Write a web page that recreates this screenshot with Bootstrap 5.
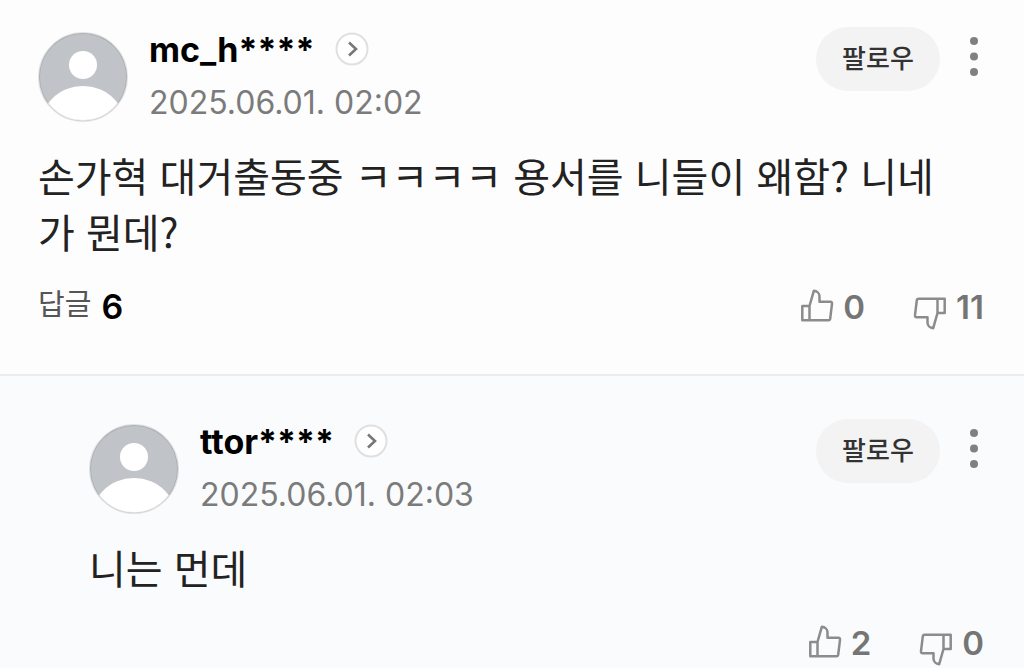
<!DOCTYPE html>
<html lang="ko">
<head>
<meta charset="utf-8">
<meta name="viewport" content="width=device-width, initial-scale=1">
<title>댓글</title>
<link href="https://cdn.jsdelivr.net/npm/bootstrap@5.3.0/dist/css/bootstrap.min.css" rel="stylesheet">
<style>
body { background: #fdfdfd; color: #222; font-family: Inter, "Noto Sans CJK KR", sans-serif; }
.comment { padding: 32px 40px 43px 38px; }
.comment-reply { padding: 48px 40px 4px 89px; background: #fafbfd; border-top: 2px solid #ececee; }
.avatar { width: 90px; height: 90px; }
.who { margin-left: 21px; }
.user { font-size: 34px; line-height: 36px; font-weight: 700; color: #000; }
.go { width: 34px; height: 34px; margin: -3px 0 0 20px; }
.stamp { font-size: 32px; line-height: 40px; color: #7b7b7b; margin-top: 15px; }
.follow { width: 124px; height: 64px; margin-top: -5px; background: #f3f3f3; color: #333; font-size: 26px; line-height: 32px; font-weight: 500; border: 0; font-family: "Noto Sans CJK KR", sans-serif; }
.follow:hover { background: #e9e9e9; color: #333; }
.more { width: 20px; height: 50px; margin-left: 24px; }
.message { font-family: "Noto Sans CJK KR", sans-serif; font-size: 40px; line-height: 56px; margin: 0; padding: 24px 16px 0 0; word-break: break-all; }
.actions { margin-top: 24px; }
.replies { font-size: 29px; line-height: 40px; color: #555; }
.replies b { font-size: 34px; font-weight: 600; color: #000; margin-left: 2px; }
.vote { font-size: 33px; line-height: 40px; font-weight: 600; color: #757575; gap: 9px; }
.vote svg { width: 34px; height: 34px; margin-top: -4px; }
.vote.vote-down svg { margin-top: 14px; }
</style>
</head>
<body>
<svg class="position-absolute" width="0" height="0" aria-hidden="true">
  <clipPath id="disc"><circle cx="45" cy="45" r="44"/></clipPath>
  <symbol id="person" viewBox="0 0 90 90">
    <circle cx="45" cy="45" r="44" fill="#c0c4c9"/>
    <g clip-path="url(#disc)" fill="#fff"><circle cx="45" cy="33" r="14"/><circle cx="45" cy="98" r="44"/></g>
    <circle cx="45" cy="45" r="44" fill="none" stroke="#000" stroke-opacity=".1" stroke-width="2"/>
  </symbol>
  <symbol id="arrow" viewBox="0 0 34 34">
    <circle cx="17" cy="17" r="15.5" fill="#fff" stroke="#e0e0e0" stroke-width="2"/>
    <path d="M14 10.5l7 6.5-7 6.5" fill="none" stroke="#777" stroke-width="2.6"/>
  </symbol>
  <symbol id="dots" viewBox="0 0 20 50">
    <g fill="#808080"><circle cx="10" cy="9" r="4"/><circle cx="10" cy="24.500" r="4"/><circle cx="10" cy="40" r="4"/></g>
  </symbol>
  <symbol id="thumb" viewBox="0 0 34 34">
    <path d="M2.300 18h7.200v14.200H2.300zM9.500 18l4.300-15.200c3.200.2 5.700 2.500 5.700 5.700v5.300h10.800q2 0 1.700 2l-1.800 14.800q-.2 1.600-1.800 1.600H9.500z" fill="none" stroke="#8c8c8c" stroke-width="2.500" stroke-linejoin="round"/>
  </symbol>
</svg>

<main>
  <article class="comment">
    <header class="d-flex align-items-start">
      <svg class="avatar flex-shrink-0"><use href="#person"/></svg>
      <div class="who">
        <div class="d-flex align-items-center">
          <span class="user">mc_h****</span>
          <a href="#" class="d-flex" aria-label="프로필 보기"><svg class="go"><use href="#arrow"/></svg></a>
        </div>
        <div class="stamp">2025.06.01. 02:02</div>
      </div>
      <button type="button" class="btn follow rounded-pill ms-auto p-0 pb-1">팔로우</button>
      <button type="button" class="btn more p-0 border-0 d-flex" aria-label="더보기"><svg class="w-100 h-100"><use href="#dots"/></svg></button>
    </header>
    <p class="message">손가혁 대거출동중 ㅋㅋㅋㅋ 용서를 니들이 왜함? 니네가 뭔데?</p>
    <footer class="actions d-flex align-items-center justify-content-between">
      <a href="#" class="replies d-flex align-items-center gap-2 text-decoration-none"><span class="pb-1">답글</span><b>6</b></a>
      <div class="d-flex gap-5">
        <button type="button" class="btn vote p-0 border-0 d-flex align-items-center" aria-label="좋아요 0"><svg><use href="#thumb"/></svg>0</button>
        <button type="button" class="btn vote vote-down p-0 border-0 d-flex align-items-center" aria-label="싫어요 11"><svg><use href="#thumb" transform="rotate(180 17 17)"/></svg>11</button>
      </div>
    </footer>
  </article>

  <article class="comment-reply">
    <header class="d-flex align-items-start">
      <svg class="avatar flex-shrink-0"><use href="#person"/></svg>
      <div class="who">
        <div class="d-flex align-items-center">
          <span class="user">ttor****</span>
          <a href="#" class="d-flex" aria-label="프로필 보기"><svg class="go"><use href="#arrow"/></svg></a>
        </div>
        <div class="stamp">2025.06.01. 02:03</div>
      </div>
      <button type="button" class="btn follow rounded-pill ms-auto p-0 pb-1">팔로우</button>
      <button type="button" class="btn more p-0 border-0 d-flex" aria-label="더보기"><svg class="w-100 h-100"><use href="#dots"/></svg></button>
    </header>
    <p class="message">니는 먼데</p>
    <footer class="actions d-flex justify-content-end gap-5">
      <button type="button" class="btn vote p-0 border-0 d-flex align-items-center" aria-label="좋아요 2"><svg><use href="#thumb"/></svg>2</button>
      <button type="button" class="btn vote vote-down p-0 border-0 d-flex align-items-center" aria-label="싫어요 0"><svg><use href="#thumb" transform="rotate(180 17 17)"/></svg>0</button>
    </footer>
  </article>
</main>
<script src="https://cdn.jsdelivr.net/npm/bootstrap@5.3.0/dist/js/bootstrap.bundle.min.js"></script>
</body>
</html>
